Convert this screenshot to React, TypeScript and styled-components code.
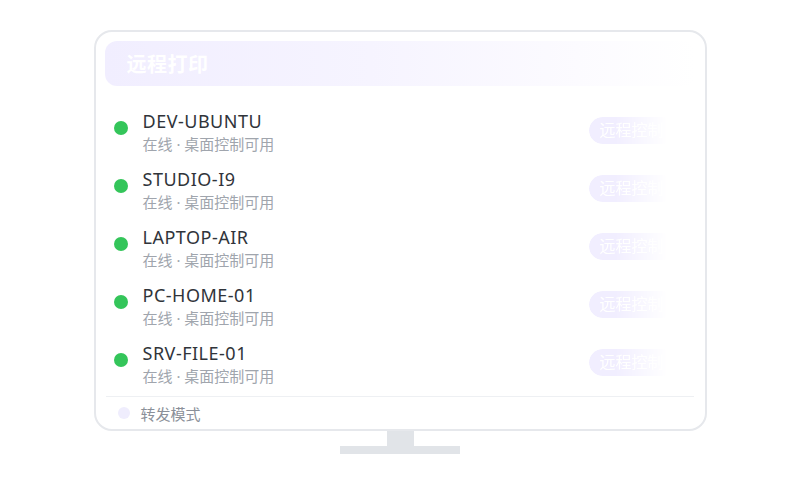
import styled, { createGlobalStyle } from 'styled-components';

const devices = ['DEV-UBUNTU', 'STUDIO-I9', 'LAPTOP-AIR', 'PC-HOME-01', 'SRV-FILE-01'];

const GlobalStyle = createGlobalStyle`
    html, body {
        margin: 0;
        padding: 0;
        background: #ffffff;
    }
    body {
        font-family: "Noto Sans", "Noto Sans CJK SC", sans-serif;
    }
`;

export default function App() {
    return (
        <>
            <GlobalStyle />
            <Page>
                <Monitor>
                    <Screen>
                        <Header>远程打印</Header>
                        <DeviceList>
                            {devices.map((name) => (
                                <DeviceRow key={name}>
                                    <StatusDot />
                                    <DeviceInfo>
                                        <DeviceName>{name}</DeviceName>
                                        <DeviceStatus>在线 · 桌面控制可用</DeviceStatus>
                                    </DeviceInfo>
                                    <ControlButton>远程控制</ControlButton>
                                </DeviceRow>
                            ))}
                        </DeviceList>
                        <Footer>
                            <ModeDot />
                            <ModeLabel>转发模式</ModeLabel>
                        </Footer>
                    </Screen>
                </Monitor>
                <Neck />
                <Base />
            </Page>
        </>
    );
}

const Page = styled.div`
    width: 800px;
    height: 500px;
    display: flex;
    flex-direction: column;
    align-items: center;
    padding-top: 30px;
    box-sizing: border-box;
`;

const Monitor = styled.div`
    width: 613px;
    height: 401px;
    box-sizing: border-box;
    border: 2px solid #e6e8ec;
    border-radius: 18px;
    background: #ffffff;
    padding: 9px 9px 0;
`;

const Screen = styled.div`
    display: flex;
    flex-direction: column;
    height: 100%;
`;

const Header = styled.div`
    height: 45px;
    border-radius: 12px;
    background: linear-gradient(90deg, #f1eeff 0%, #f6f4ff 45%, #fcfbff 80%, #ffffff 100%);
    color: #ffffff;
    font-size: 20px;
    font-weight: 700;
    display: flex;
    align-items: center;
    padding-left: 22px;
    letter-spacing: 0.5px;
`;

const DeviceList = styled.div`
    display: flex;
    flex-direction: column;
    margin-top: 17px;
    padding-bottom: 3px;
    border-bottom: 1px solid #eef0f3;
    margin-left: 1px;
    margin-right: 2px;
`;

const DeviceRow = styled.div`
    display: flex;
    align-items: flex-start;
    padding: 7px 18px 7px 8px;
    height: 58px;
    box-sizing: border-box;
`;

const StatusDot = styled.span`
    width: 14px;
    height: 14px;
    border-radius: 50%;
    background: #34c55a;
    margin-top: 11px;
    flex-shrink: 0;
`;

const DeviceInfo = styled.div`
    display: flex;
    flex-direction: column;
    gap: 2px;
    margin-left: 15px;
    flex: 1;
`;

const DeviceName = styled.span`
    font-size: 18px;
    line-height: 22px;
    color: #30343a;
    letter-spacing: 0.5px;
`;

const DeviceStatus = styled.span`
    font-size: 15px;
    line-height: 20px;
    color: #a0a5ad;
`;

const ControlButton = styled.span`
    width: 87px;
    height: 27px;
    margin-top: 7px;
    border-radius: 14px;
    background: #f1eeff;
    color: #ffffff;
    font-family: "Liberation Serif", "Noto Sans CJK SC", serif;
    font-size: 16px;
    line-height: 27px;
    padding-left: 11px;
    box-sizing: border-box;
    -webkit-mask-image: linear-gradient(90deg, #000 30%, transparent 90%);
    mask-image: linear-gradient(90deg, #000 30%, transparent 90%);
`;

const Footer = styled.div`
    flex: 1;
    display: flex;
    align-items: center;
    gap: 11px;
    padding-left: 13px;
`;

const ModeDot = styled.span`
    width: 12px;
    height: 12px;
    border-radius: 50%;
    background: #efedfd;
`;

const ModeLabel = styled.span`
    font-size: 15px;
    color: #8b9099;
`;

const Neck = styled.div`
    width: 27px;
    height: 15px;
    background: #e1e4e8;
`;

const Base = styled.div`
    width: 120px;
    height: 8px;
    background: #e1e4e8;
`;
